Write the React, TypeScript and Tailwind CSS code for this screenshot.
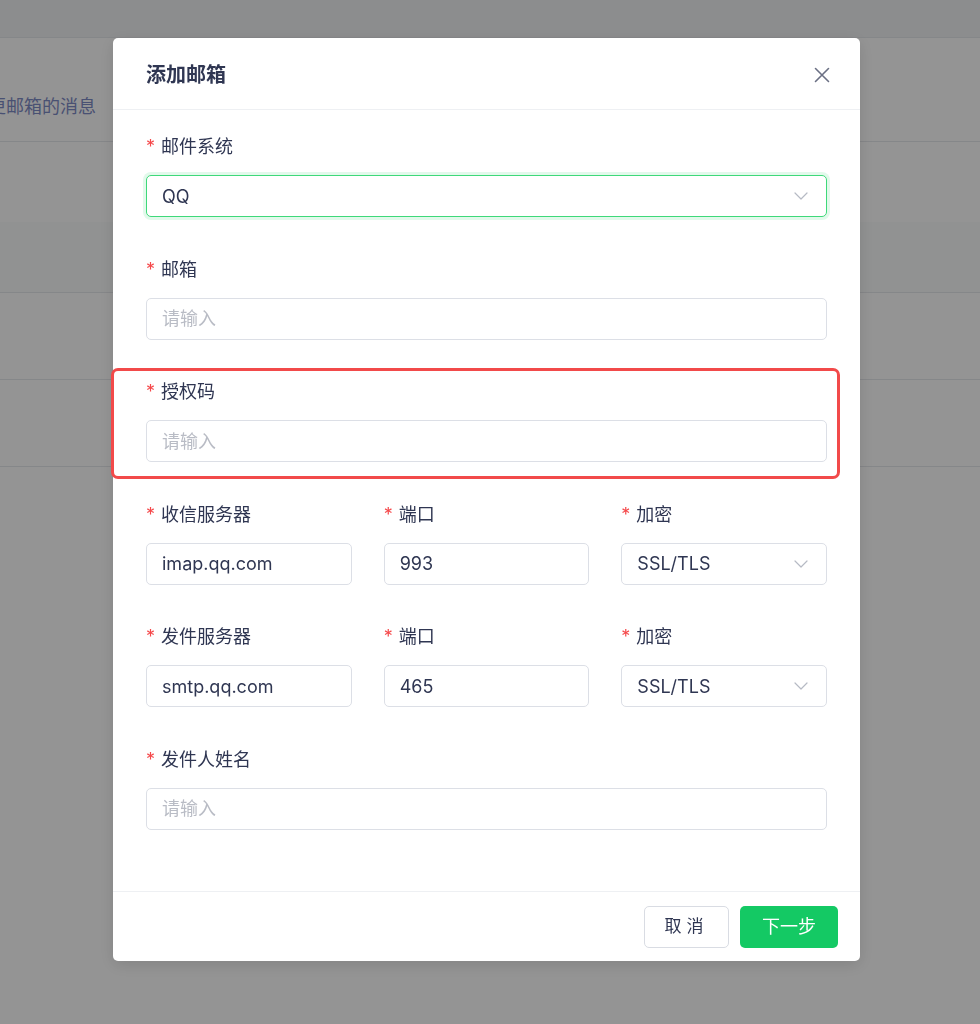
import React from "react";

const FONT = { fontFamily: '"Inter", "Noto Sans CJK SC", sans-serif' };

function Chevron() {
  return (
    <svg width="14" height="8" viewBox="0 0 14 8" fill="none" className="shrink-0">
      <path d="M1 1l6 6 6-6" stroke="#b6bac4" strokeWidth="1.2" strokeLinecap="round" strokeLinejoin="round" />
    </svg>
  );
}

function Label({ text }: { text: string }) {
  return (
    <div className="flex h-[24px] items-center text-[18px] leading-[24px] text-[#2f3652]">
      <span className="mr-[6px] text-[#f5484a]">*</span>
      {text}
    </div>
  );
}

function TextBox({ value, placeholder }: { value?: string; placeholder?: string }) {
  return (
    <div className="flex h-[42px] items-center rounded-[5px] border border-[#dcdfe6] bg-white px-[15px] text-[18px]">
      {value ? (
        <span className="text-[#2f3652]">{value}</span>
      ) : (
        <span className="text-[#b9bcc5]">{placeholder}</span>
      )}
    </div>
  );
}

function SelectBox({ value, active }: { value: string; active?: boolean }) {
  return (
    <div
      className={
        active
          ? "flex h-[42px] items-center justify-between rounded-[5px] border-[1.5px] border-[#3fd97a] bg-white px-[15px] text-[18px] ring-[3px] ring-[#3fd97a]/15"
          : "flex h-[42px] items-center justify-between rounded-[5px] border border-[#dcdfe6] bg-white px-[15px] text-[18px]"
      }
    >
      <span className="text-[#2f3652]">{value}</span>
      <span className="mr-[3px]">
        <Chevron />
      </span>
    </div>
  );
}

function Field({ label, children }: { label: string; children: React.ReactNode }) {
  return (
    <div className="mb-[40.6px]">
      <Label text={label} />
      <div className="mt-[16px]">{children}</div>
    </div>
  );
}

function BackgroundPage() {
  return (
    <div className="min-h-[1024px] w-full bg-white" style={FONT}>
      <div className="h-[38px] border-b border-[#e6e8ec] bg-[#f2f3f5]" />
      <div className="flex h-[104px] items-end overflow-hidden border-b border-[#e6e8ec] pb-[21px]">
        <span className="ml-[-12px] whitespace-nowrap text-[18px] text-[#7f8cc6]">更邮箱的消息</span>
      </div>
      <div className="h-[80px]" />
      <div className="h-[71px] border-b border-[#e6e8ec] bg-[#fafbfc]" />
      <div className="h-[87px] border-b border-[#e6e8ec]" />
      <div className="h-[87px] border-b border-[#e6e8ec]" />
    </div>
  );
}

export default function App() {
  return (
    <div className="relative h-[1024px] w-[980px] overflow-hidden" style={FONT}>
      <BackgroundPage />
      <div className="fixed inset-0 bg-black/[0.42]">
        <div className="flex items-start pl-[113px] pt-[38px]">
          <div className="relative w-[747px] rounded-[5px] bg-white shadow-[0_4px_16px_rgba(0,0,0,0.12)]">
            <div className="flex h-[72px] items-center justify-between border-b border-[#eef0f3] pl-[33px] pr-[30px]">
              <h2 className="mt-[2px] text-[20px] font-semibold text-[#2f3652]">添加邮箱</h2>
              <svg width="16" height="16" viewBox="0 0 16 16" fill="none" className="mt-[2px]">
                <path d="M1.5 1.5l13 13M14.5 1.5l-13 13" stroke="#6b7084" strokeWidth="1.6" strokeLinecap="round" />
              </svg>
            </div>

            <div className="px-[33px] pb-[20px] pt-[25px]">
              <Field label="邮件系统">
                <SelectBox value="QQ" active />
              </Field>
              <Field label="邮箱">
                <TextBox placeholder="请输入" />
              </Field>
              <div className="relative mb-[40.6px]">
                <Label text="授权码" />
                <div className="mt-[16px]">
                  <TextBox placeholder="请输入" />
                </div>
                <div className="pointer-events-none absolute bottom-[-17px] left-[-35px] right-[-13px] top-[-12px] rounded-[7px] border-[3px] border-[#f24a4a]" />
              </div>
              <div className="grid grid-cols-3 gap-x-[32px]">
                <Field label="收信服务器">
                  <TextBox value="imap.qq.com" />
                </Field>
                <Field label="端口">
                  <TextBox value="993" />
                </Field>
                <Field label="加密">
                  <SelectBox value="SSL/TLS" />
                </Field>
                <Field label="发件服务器">
                  <TextBox value="smtp.qq.com" />
                </Field>
                <Field label="端口">
                  <TextBox value="465" />
                </Field>
                <Field label="加密">
                  <SelectBox value="SSL/TLS" />
                </Field>
              </div>
              <Field label="发件人姓名">
                <TextBox placeholder="请输入" />
              </Field>
            </div>

            <div className="flex items-center justify-end gap-[11px] border-t border-[#eef0f3] pb-[13px] pr-[22px] pt-[14px]">
              <button className="flex h-[42px] w-[85px] items-center justify-center rounded-[5px] border border-[#d9dce3] bg-white text-[17px] tracking-[0.3em] text-[#2f3652]">
                取消
              </button>
              <button className="flex h-[42px] w-[98px] items-center justify-center rounded-[5px] bg-[#14c964] text-[18px] text-white">
                下一步
              </button>
            </div>
          </div>
        </div>
      </div>
    </div>
  );
}
